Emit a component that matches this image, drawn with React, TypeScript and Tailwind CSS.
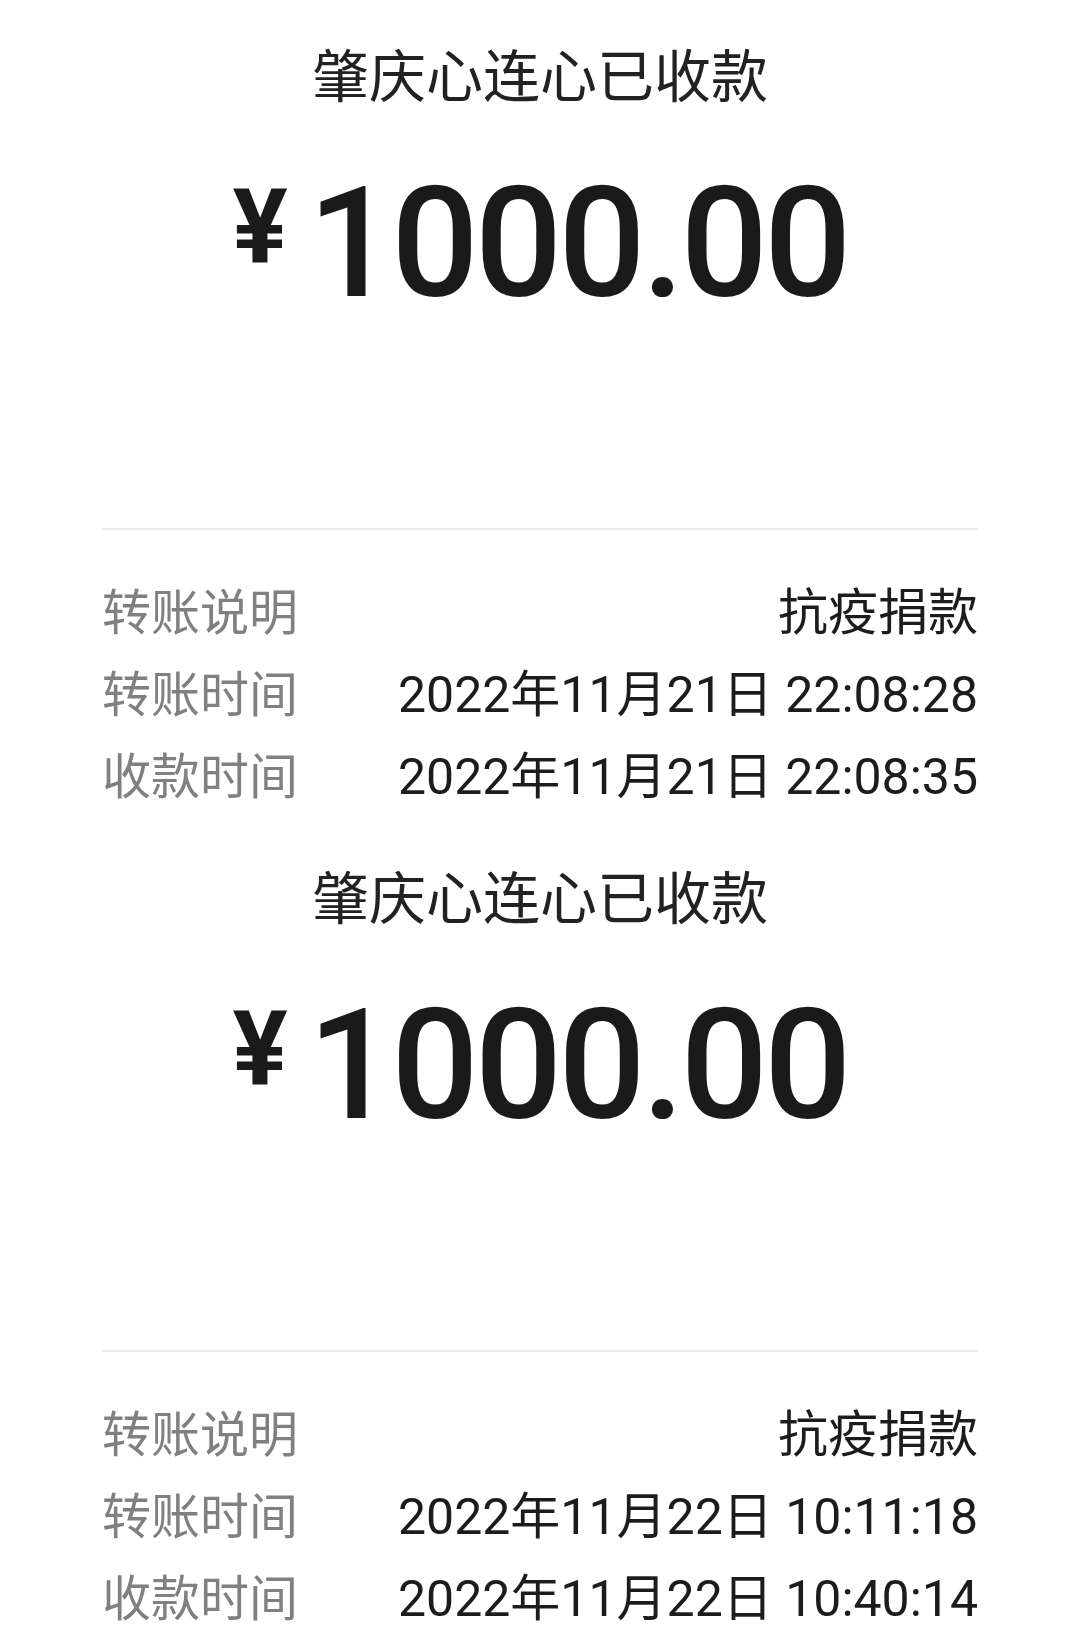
import React from "react";

type Block = {
  note: string;
  transfer: string;
  receive: string;
};

const blocks: Block[] = [
  {
    note: "抗疫捐款",
    transfer: "2022年11月21日 22:08:28",
    receive: "2022年11月21日 22:08:35",
  },
  {
    note: "抗疫捐款",
    transfer: "2022年11月22日 10:11:18",
    receive: "2022年11月22日 10:40:14",
  },
];

const cjk = "font-['Noto_Sans_CJK_SC',sans-serif]";
const mixed = "font-['Roboto','Noto_Sans_CJK_SC',sans-serif]";

function Row({ label, value }: { label: string; value: string }) {
  return (
    <div className="flex h-[82px] items-center justify-between">
      <span className={`${cjk} text-[49px] leading-none text-[#808080]`}>{label}</span>
      <span className={`${mixed} mt-[10px] text-[50px] leading-none text-[#1c1c1c]`}>{value}</span>
    </div>
  );
}

function Receipt({ b }: { b: Block }) {
  return (
    <div className="flex flex-col px-[102px] pb-[9px]">
      <div className="flex h-[144px] items-center justify-center">
        <span className={`${cjk} text-[57px] leading-none text-[#222222]`}>肇庆心连心已收款</span>
      </div>
      <div className="mt-[23px] flex items-start justify-center font-['Roboto',sans-serif] leading-none text-[#1a1a1a]">
        <span className="mt-[8px] mr-[20px] text-[103px] font-bold leading-none">¥</span>
        <span className="text-[154px] font-medium leading-none tracking-[-4px]">1000.00</span>
      </div>
      <div className="mt-[207px] h-[2px] bg-[#ededed]" />
      <div className="mt-[37px] flex flex-col">
        <Row label="转账说明" value={b.note} />
        <Row label="转账时间" value={b.transfer} />
        <Row label="收款时间" value={b.receive} />
      </div>
    </div>
  );
}

export default function App() {
  return (
    <div className="min-h-[1647px] w-[1080px] bg-white">
      {blocks.map((b, i) => (
        <Receipt key={i} b={b} />
      ))}
    </div>
  );
}
